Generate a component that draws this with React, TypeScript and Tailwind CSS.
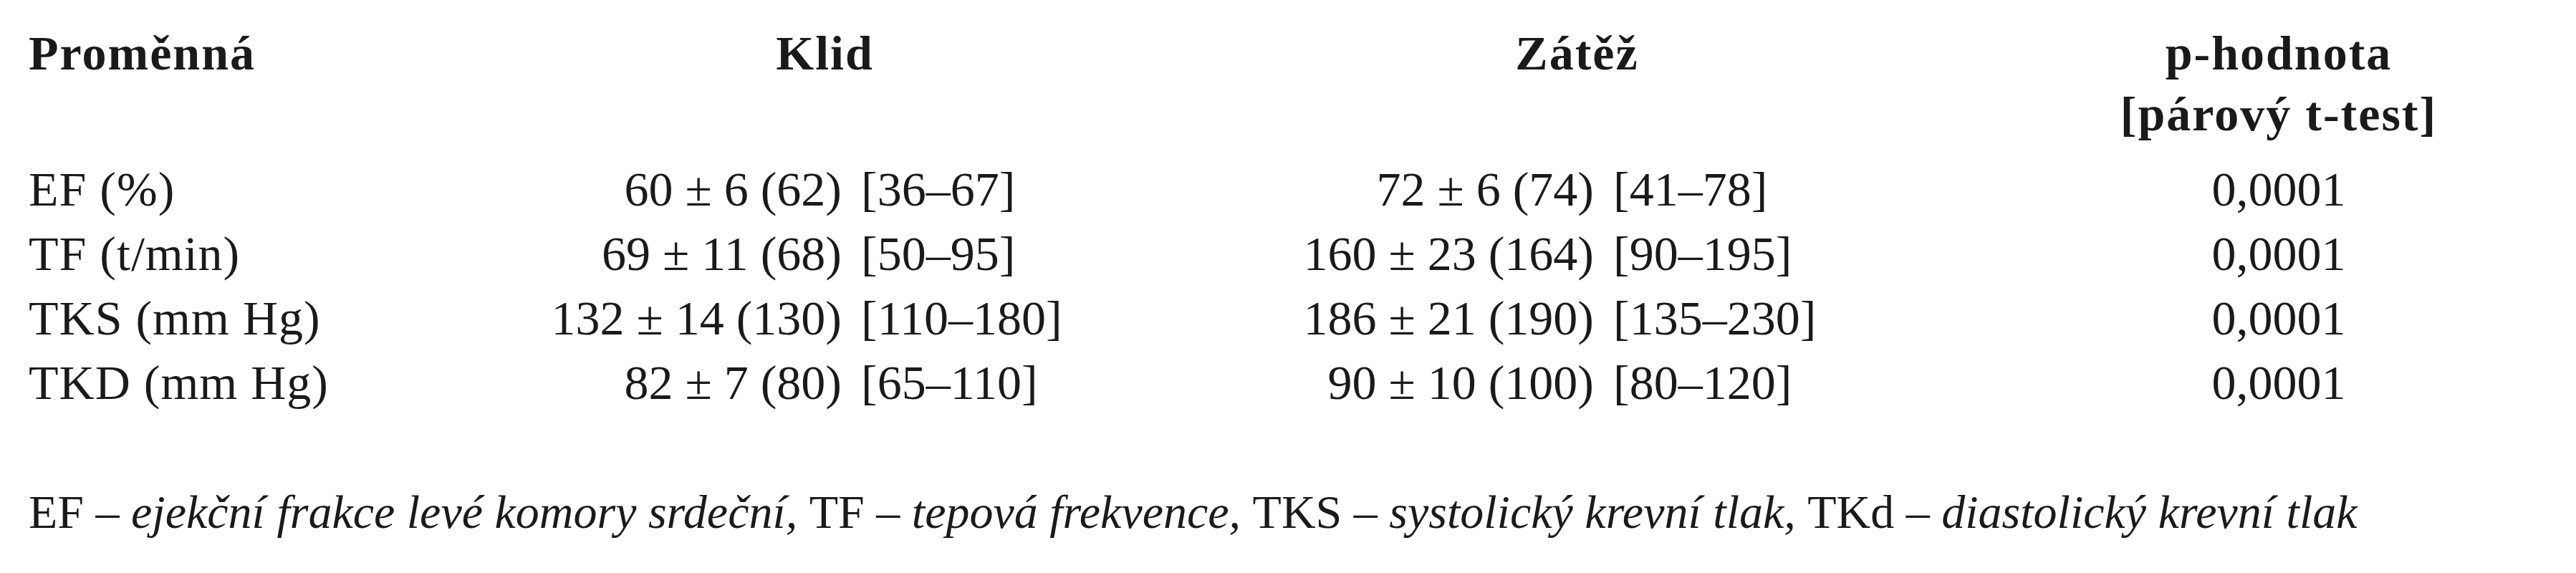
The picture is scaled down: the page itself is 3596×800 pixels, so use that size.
const rows = [
  { name: 'EF (%)', restMean: '60 ± 6 (62)', restRange: '[36–67]', loadMean: '72 ± 6 (74)', loadRange: '[41–78]', p: '0,0001' },
  { name: 'TF (t/min)', restMean: '69 ± 11 (68)', restRange: '[50–95]', loadMean: '160 ± 23 (164)', loadRange: '[90–195]', p: '0,0001' },
  { name: 'TKS (mm Hg)', restMean: '132 ± 14 (130)', restRange: '[110–180]', loadMean: '186 ± 21 (190)', loadRange: '[135–230]', p: '0,0001' },
  { name: 'TKD (mm Hg)', restMean: '82 ± 7 (80)', restRange: '[65–110]', loadMean: '90 ± 10 (100)', loadRange: '[80–120]', p: '0,0001' },
];

const notes = [
  { abbr: 'EF', text: ' – ejekční frakce levé komory srdeční, ' },
  { abbr: 'TF', text: ' – tepová frekvence, ' },
  { abbr: 'TKS', text: ' – systolický krevní tlak, ' },
  { abbr: 'TKd', text: ' – diastolický krevní tlak' },
];

export default function App() {
  return (
    <div className="w-[3596px] h-[800px] bg-white text-[#1a1a1a] pl-[40px] pt-[32px] [font-family:'Liberation_Serif',serif] text-[68px]">
      {/* hlavička */}
      <div className="grid grid-cols-[660px_475px_575px_475px_575px_762px] font-bold leading-[85px] tracking-[2px]">
        <div>Proměnná</div>
        <div className="col-span-2 text-center pr-[147px]">Klid</div>
        <div className="col-span-2 text-center pr-[147px]">Zátěž</div>
        <div className="text-center">
          p-hodnota
          <br />
          [párový t-test]
        </div>
      </div>

      <div className="mt-[17px] grid grid-cols-[660px_475px_575px_475px_575px_762px] leading-[90px]">
        {rows.map((r) => (
          <div key={r.name} className="contents">
            <div className="tracking-[1px]">{r.name}</div>
            <div className="text-right whitespace-nowrap">{r.restMean}</div>
            <div className="pl-[27px] whitespace-nowrap">{r.restRange}</div>
            <div className="text-right whitespace-nowrap">{r.loadMean}</div>
            <div className="pl-[27px] whitespace-nowrap">{r.loadRange}</div>
            <div className="text-center">{r.p}</div>
          </div>
        ))}
      </div>

      <p className="mt-[91px] text-[66px] leading-[90px] whitespace-nowrap">
        {notes.map((n) => (
          <span key={n.abbr}>
            {n.abbr}
            <i>{n.text}</i>
          </span>
        ))}
      </p>
    </div>
  );
}
